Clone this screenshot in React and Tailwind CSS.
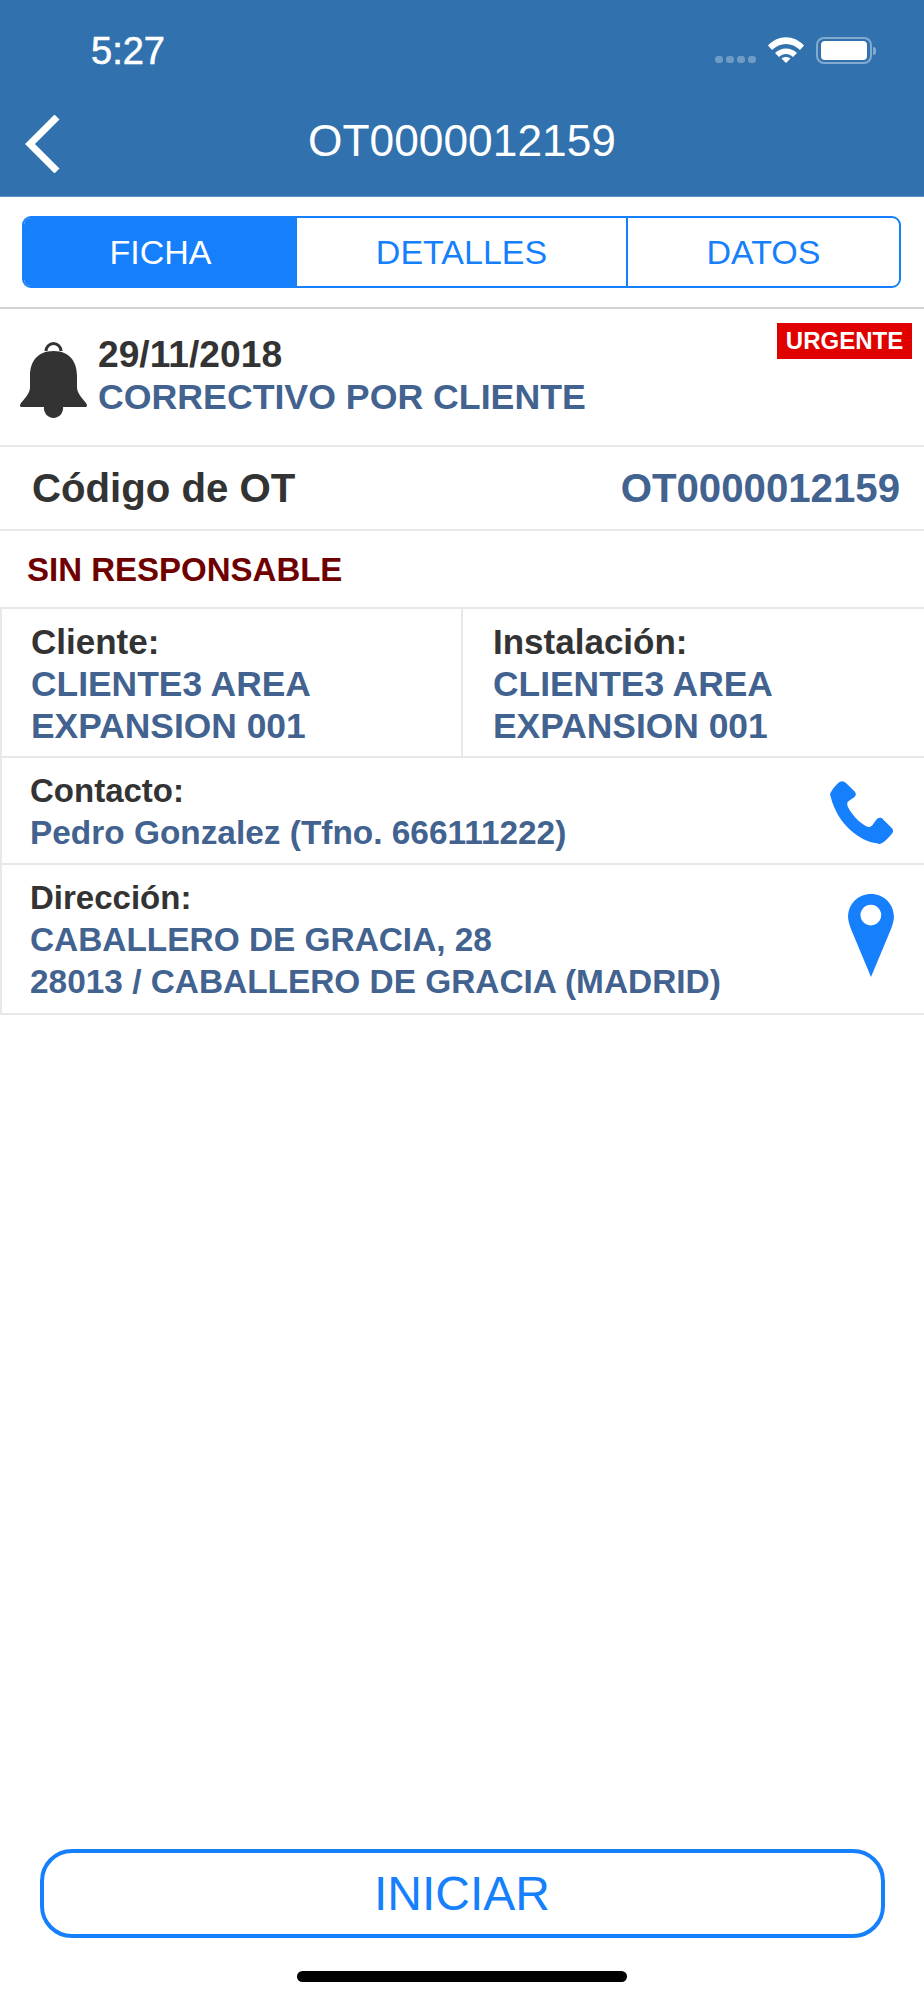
const BLUE = "#167ffc";

function Bell() {
  return (
    <svg width="67" height="76" viewBox="0 0 67 76" className="shrink-0">
      <path d="M26 9 a7.5 7.5 0 1 1 15 0" fill="none" stroke="#333" strokeWidth="3" />
      <path d="M33.5 9 C50 9 57 20 57 34 L57 45 C57 50 60 54 66 61 Q68.5 65 65 65 L2 65 Q-1.5 65 1 61 C7 54 10 50 10 45 L10 34 C10 20 17 9 33.5 9 Z" fill="#333" />
      <path d="M24 64 h19 C44 71 39 76 33.5 76 C28 76 23 71 24 64 Z" fill="#333" />
    </svg>
  );
}

function Phone() {
  return (
    <svg width="63" height="63" viewBox="0 0 188 188" className="shrink-0">
      <path
        d="M0 40 C2 30 22 6 30 2 C38 -2 44 2 50 8 L72 30 C80 38 78 44 70 50 L58 58 C50 62 50 70 54 78 C66 102 88 124 110 136 C118 140 124 136 128 130 L138 116 C144 108 152 108 158 114 L182 138 C190 146 190 152 184 158 C176 168 162 182 154 186 C148 189 144 188 140 186 C90 180 22 130 2 46 Z"
        fill={BLUE}
      />
    </svg>
  );
}

function Pin() {
  return (
    <svg width="46" height="83" viewBox="0 0 137 248" className="shrink-0">
      <path
        fillRule="evenodd"
        d="M68.5 0 C107 0 137 30 137 68 C137 80 133 92 128 105 L68.5 248 L9 105 C4 92 0 80 0 68 C0 30 30 0 68.5 0 Z M68 32 a31 31 0 1 0 0.01 0 Z"
        fill={BLUE}
      />
    </svg>
  );
}

function Wifi() {
  return (
    <svg width="36" height="26" viewBox="0 0 36 26">
      <path d="M0 8.5 C10 -2.5 26 -2.5 36 8.5 L32 13 C24 5 12 5 4 13 Z" fill="#fff" />
      <path d="M7 16 C13 10 23 10 29 16 L25 20 C21 16 15 16 11 20 Z" fill="#fff" />
      <path d="M13.5 21.5 C16 19.5 20 19.5 22.5 21.5 L18 26 Z" fill="#fff" />
    </svg>
  );
}

function StatusBar() {
  return (
    <div className="flex h-[88px] items-start justify-between pt-[31px] pl-[91px] pr-[48px]">
      <span className="pt-[1px] text-[38px] leading-[38px] text-white [-webkit-text-stroke:0.6px_white]">5:27</span>
      <div className="flex items-start pt-[6px]">
        <div className="mt-[19px] flex gap-[3px]">
          <span className="h-[7px] w-[8px] rounded-[3px] bg-white/30" />
          <span className="h-[7px] w-[8px] rounded-[3px] bg-white/30" />
          <span className="h-[7px] w-[8px] rounded-[3px] bg-white/30" />
          <span className="h-[7px] w-[8px] rounded-[3px] bg-white/30" />
        </div>
        <div className="ml-[12px]">
          <Wifi />
        </div>
        <div className="ml-[12px] flex items-center">
          <div className="flex h-[27px] w-[56px] items-center justify-center rounded-[8px] border-[2px] border-white/40">
            <div className="h-[19px] w-[46px] rounded-[4px] bg-white" />
          </div>
          <div className="ml-[1px] h-[8px] w-[3px] rounded-r-full bg-white/40" />
        </div>
      </div>
    </div>
  );
}

function Tabs() {
  return (
    <div className="flex h-[72px] overflow-hidden rounded-[9px] border-[2px] border-[#167ffc] text-[34px]">
      <div className="flex w-[273px] items-center justify-center bg-[#167ffc] text-white">FICHA</div>
      <div className="flex w-[331px] items-center justify-center border-r-[2px] border-[#167ffc] text-[#167ffc]">DETALLES</div>
      <div className="flex flex-1 items-center justify-center text-[#167ffc]">DATOS</div>
    </div>
  );
}

function Field({ label, lines, size, valueSize, className = "" }) {
  return (
    <div className={className}>
      <div className={`${size} font-bold leading-[42px] text-[#333]`}>{label}</div>
      {lines.map((l) => (
        <div key={l} className={`${valueSize} font-bold leading-[42px] text-[#42628f]`}>{l}</div>
      ))}
    </div>
  );
}

export default function App() {
  return (
    <div className="flex h-[2000px] w-[924px] flex-col bg-white font-['Liberation_Sans',Arial,sans-serif]">
      {/* cabecera */}
      <div className="h-[197px] border-b border-[#5f93c6] bg-[#3171ad]">
        <StatusBar />
        <div className="grid grid-cols-[1fr_auto_1fr] items-center pt-[27px]">
          <svg width="36" height="58" viewBox="0 0 36 58" className="ml-[25px]">
            <path d="M32 2 L5 29 L32 56" fill="none" stroke="#fff" strokeWidth="7" />
          </svg>
          <div className="-mt-[7px] text-[44.3px] leading-[50px] text-white">OT0000012159</div>
          <div />
        </div>
      </div>

      {/* pestañas */}
      <div className="border-b-[2px] border-[#d2d2d2] pt-[19px] pr-[23px] pb-[19px] pl-[22px]">
        <Tabs />
      </div>

      {/* fecha y tipo */}
      <div className="flex h-[138px] items-start justify-between border-b-[2px] border-[#e8e8e8] pr-[12px] pl-[20px]">
        <div className="flex items-start gap-[11px] pt-[33px]">
          <Bell />
          <div className="-mt-[8px]">
            <div className="-mt-[1px] text-[37.2px] font-bold leading-[42px] text-[#333]">29/11/2018</div>
            <div className="mt-[1px] text-[35.7px] font-bold leading-[42px] text-[#42628f]">CORRECTIVO POR CLIENTE</div>
          </div>
        </div>
        <div className="mt-[14px] flex h-[36px] w-[135px] items-center justify-center bg-[#e00000] text-[24px] font-bold text-white">URGENTE</div>
      </div>

      {/* codigo */}
      <div className="flex h-[84px] items-center justify-between border-b-[2px] border-[#e8e8e8] pt-[2px] pr-[24px] pl-[32px] text-[40.2px] font-bold">
        <span className="text-[#333]">Código de OT</span>
        <span className="text-[#42628f]">OT0000012159</span>
      </div>

      <div className="flex h-[78px] items-center border-b-[2px] border-[#e8e8e8] pt-[2px] pl-[27px] text-[33px] font-bold text-[#6f0000]">SIN RESPONSABLE</div>

      {/* datos */}
      <div className="border-l-[2px] border-[#e8e8e8]">
        <div className="flex h-[149px] border-b-[2px] border-[#e8e8e8]">
          <Field label="Cliente:" lines={["CLIENTE3 AREA", "EXPANSION 001"]} size="text-[35px]" valueSize="text-[35.4px]" className="w-[461px] border-r-[2px] border-[#e8e8e8] pt-[12px] pl-[29px]" />
          <Field label="Instalación:" lines={["CLIENTE3 AREA", "EXPANSION 001"]} size="text-[35px]" valueSize="text-[35.4px]" className="flex-1 pt-[12px] pl-[30px]" />
        </div>
        <div className="flex h-[107px] items-start justify-between border-b-[2px] border-[#e8e8e8] pr-[31px]">
          <Field label="Contacto:" lines={["Pedro Gonzalez (Tfno. 666111222)"]} size="text-[33px]" valueSize="text-[33.4px]" className="pt-[12px] pl-[28px]" />
          <div className="pt-[23px]">
            <Phone />
          </div>
        </div>
        <div className="flex h-[150px] items-start justify-between border-b-[2px] border-[#e8e8e8] pr-[30px]">
          <Field label="Dirección:" lines={["CABALLERO DE GRACIA, 28", "28013 / CABALLERO DE GRACIA (MADRID)"]} size="text-[33px]" valueSize="text-[33.4px]" className="pt-[12px] pl-[28px]" />
          <div className="pt-[29px]">
            <Pin />
          </div>
        </div>
      </div>

      {/* boton */}
      <div className="mt-auto flex flex-col items-center pb-[18px]">
        <div className="flex h-[89px] w-[845px] items-center justify-center rounded-[32px] border-[4px] border-[#167ffc] text-[48px] text-[#167ffc]">INICIAR</div>
        <div className="mt-[33px] h-[11px] w-[330px] rounded-full bg-black" />
      </div>
    </div>
  );
}
